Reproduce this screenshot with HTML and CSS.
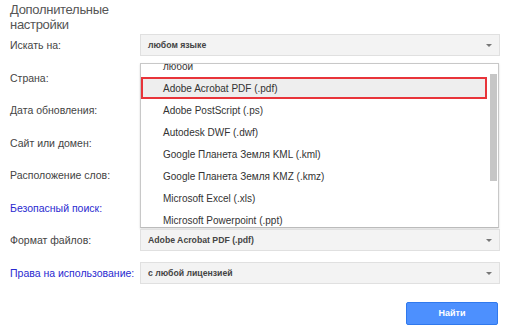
FILE: index.html
```html
<!DOCTYPE html>
<html lang="ru">
<head>
  <meta charset="UTF-8" />
  <title>Расширенный поиск</title>
  <link rel="stylesheet" href="styles.css">
</head>
<body>
  <div class="panel">
    <h2 class="title">Дополнительные<br>настройки</h2>

    <div class="form">
      <div class="label">Искать на:</div>
      <div class="select">любом языке<span class="arrow"></span></div>

      <div class="label">Страна:</div>
      <div class="empty"></div>

      <div class="label">Дата обновления:</div>
      <div class="empty"></div>

      <div class="label">Сайт или домен:</div>
      <div class="empty"></div>

      <div class="label">Расположение слов:</div>
      <div class="empty"></div>

      <div class="label link">Безопасный поиск:</div>
      <div class="empty"></div>

      <div class="label">Формат файлов:</div>
      <div class="select-wrap">
        <!-- open list of the format select -->
        <div class="dropdown">
          <ul class="options">
            <li>любой</li>
            <li class="active">Adobe Acrobat PDF (.pdf)</li>
            <li>Adobe PostScript (.ps)</li>
            <li>Autodesk DWF (.dwf)</li>
            <li>Google Планета Земля KML (.kml)</li>
            <li>Google Планета Земля KMZ (.kmz)</li>
            <li>Microsoft Excel (.xls)</li>
            <li>Microsoft Powerpoint (.ppt)</li>
          </ul>
          <div class="scrollbar"></div>
        </div>
        <div class="select">Adobe Acrobat PDF (.pdf)<span class="arrow"></span></div>
      </div>

      <div class="label link">Права на использование:</div>
      <div class="select">с любой лицензией<span class="arrow"></span></div>
    </div>

    <div class="actions">
      <button class="btn">Найти</button>
    </div>
  </div>
</body>
</html>
```

FILE: styles.css
```css
body {
  margin: 0;
  background: #fff;
  font-family: "Liberation Sans", Arial, sans-serif;
  color: #444;
}

.panel {
  padding: 2px 20px 0 10px;
}

.title {
  margin: 0;
  font-size: 13px;
  line-height: 15px;
  letter-spacing: -0.3px;
  font-weight: normal;
  color: #555;
}

.form {
  margin-top: 2px;
  display: grid;
  grid-template-columns: 130px 360px;
  grid-auto-rows: 22px;
  row-gap: 10.5px;
}

.label {
  display: flex;
  align-items: center;
  white-space: nowrap;
  font-size: 10.5px;
  color: #444;
}

.label.link {
  color: #2a2ad0;
}

.select-wrap {
  position: relative;
}

.select {
  position: relative;
  height: 22px;
  box-sizing: border-box;
  display: flex;
  align-items: center;
  padding-left: 7px;
  border: 1px solid #e0e0e0;
  background: #f3f3f3;
  font-size: 8.7px;
  font-weight: bold;
  color: #444;
}

.arrow {
  position: absolute;
  right: 7px;
  top: 9px;
  border-left: 3px solid transparent;
  border-right: 3px solid transparent;
  border-top: 3px solid #777;
}

.dropdown {
  position: absolute;
  left: 0;
  bottom: 100%;
  margin-bottom: 1px;
  width: 359px;
  height: 165px;
  box-sizing: border-box;
  border: 1px solid #c8c8c8;
  border-bottom-color: #bbb;
  background: #fff;
  overflow: hidden;
  box-shadow: 0 1px 2px rgba(0, 0, 0, 0.15);
}

.options {
  list-style: none;
  margin: -9px 0 0 0;
  padding: 0;
}

.options li {
  height: 22px;
  box-sizing: border-box;
  margin-right: 11px;
  padding-left: 22px;
  display: flex;
  align-items: center;
  font-size: 10px;
  color: #333;
}

.options li.active {
  background: #eee;
  border: 2px solid #e8343a;
  padding-left: 20px;
}

.scrollbar {
  position: absolute;
  right: 1px;
  top: 10px;
  width: 7px;
  height: 107px;
  background: #c6c6c6;
}

.actions {
  display: flex;
  justify-content: flex-end;
  margin-top: 18px;
  padding-right: 2px;
}

.btn {
  width: 92px;
  height: 23px;
  border: 1px solid #3079ed;
  border-radius: 2px;
  background: #4d90fe;
  color: #fff;
  font-family: inherit;
  font-size: 9px;
  font-weight: bold;
}
```
